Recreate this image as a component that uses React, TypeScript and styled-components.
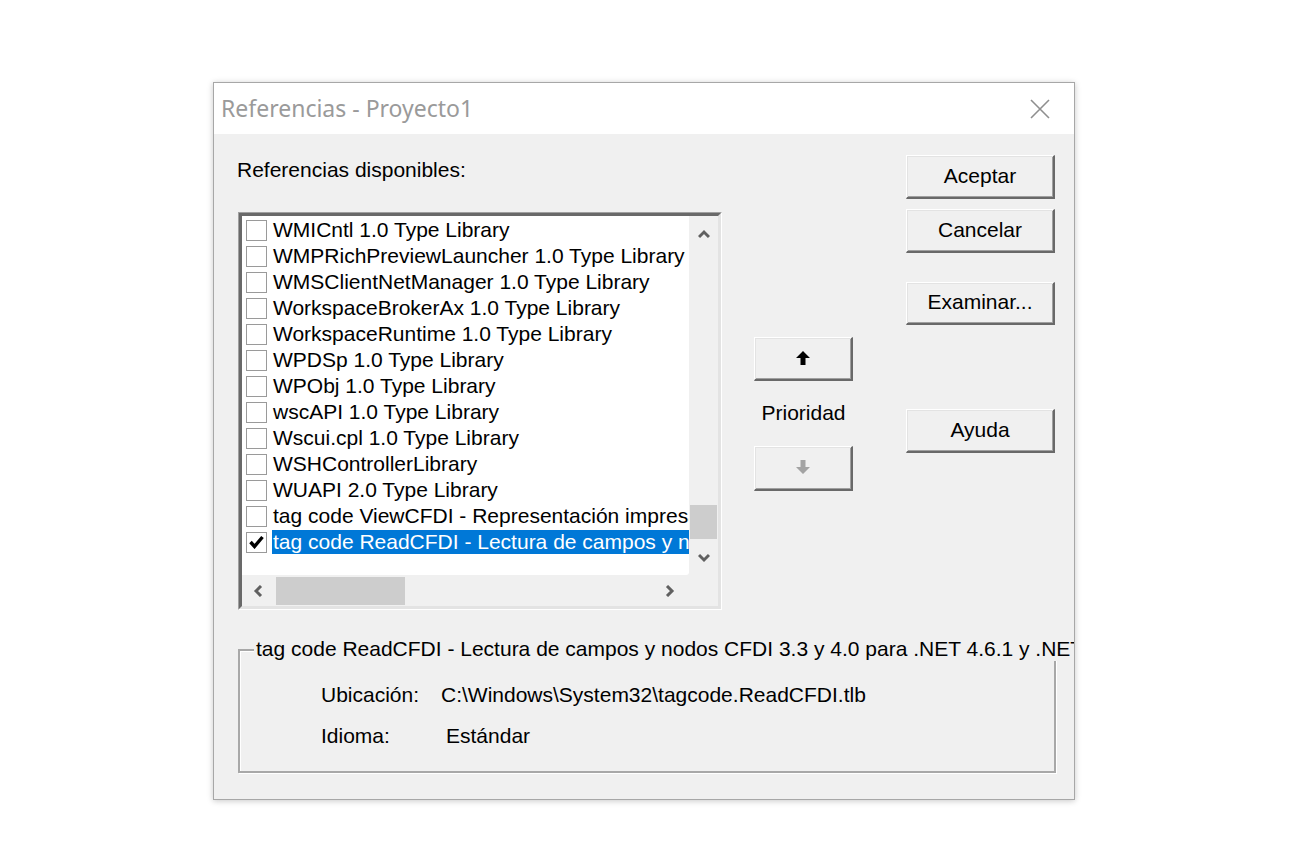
import styled, { createGlobalStyle } from 'styled-components'

const GlobalStyle = createGlobalStyle`
  html, body {
    margin: 0;
    padding: 0;
    background: #ffffff;
  }
  body {
    font-family: "Liberation Sans", Arial, sans-serif;
  }
`

const Page = styled.div`
  width: 1290px;
  height: 860px;
  padding: 82px 0 0 213px;
  box-sizing: border-box;
`

const Dialog = styled.div`
  width: 862px;
  height: 718px;
  box-sizing: border-box;
  border: 1px solid #a7a7a7;
  background: #f0f0f0;
  box-shadow: 0 1px 6px rgba(0, 0, 0, 0.22);
  overflow: hidden;
  display: flex;
  flex-direction: column;
`

const TitleBar = styled.div`
  height: 51px;
  flex: none;
  background: #ffffff;
  display: flex;
  align-items: center;
  justify-content: space-between;
  padding: 0 24px 0 7px;
`

const Title = styled.div`
  font-family: "Noto Sans", "Open Sans", sans-serif;
  font-size: 23px;
  color: #9a9a9a;
  margin-top: -1px;
`

const Body = styled.div`
  flex: 1;
  display: flex;
  flex-direction: column;
  padding: 0 0 0 23px;
  font-size: 21px;
`

const TopRow = styled.div`
  display: flex;
`

const LeftCol = styled.div`
  width: 485px;
  display: flex;
  flex-direction: column;
`

const Label = styled.div`
  margin-top: 24px;
  height: 24px;
  line-height: 24px;
  color: #000;
`

const ListBox = styled.div`
  margin-top: 30px;
  margin-left: 1px;
  width: 484px;
  height: 398px;
  box-sizing: border-box;
  border: 1px solid;
  border-color: #a0a0a0 #ffffff #ffffff #a0a0a0;
`

const ListInner = styled.div`
  width: 100%;
  height: 100%;
  box-sizing: border-box;
  border: 3px solid;
  border-color: #696969 #e3e3e3 #e3e3e3 #696969;
  display: grid;
  grid-template-columns: 1fr 29px;
  grid-template-rows: 1fr 31px;
  background: #f0f0f0;
`

const Items = styled.div`
  background: #ffffff;
  overflow: hidden;
  padding-top: 1px;
  border-bottom-right-radius: 3px;
`

const Row = styled.div`
  height: 26px;
  display: flex;
  align-items: center;
  white-space: nowrap;
`

const Check = styled.div`
  flex: none;
  width: 21px;
  height: 21px;
  box-sizing: border-box;
  margin: 0 5px 0 4px;
  border: 1px solid #9a9a9a;
  background: #fff;
  display: flex;
  align-items: center;
  justify-content: center;
`

const ItemText = styled.span<{ $selected?: boolean }>`
  line-height: 24px;
  padding: 0 1px;
  color: ${(p) => (p.$selected ? '#ffffff' : '#000000')};
  background: ${(p) => (p.$selected ? '#0078d7' : 'transparent')};
`

const VScroll = styled.div`
  display: flex;
  flex-direction: column;
  background: #f0f0f0;
`

const VArrow = styled.div<{ $h: number }>`
  height: ${(p) => p.$h}px;
  flex: none;
  display: flex;
  align-items: center;
  justify-content: center;
`

const VTrack = styled.div`
  flex: 1;
  display: flex;
  flex-direction: column;
  justify-content: flex-end;
  padding: 0 1px;
`

const VThumb = styled.div`
  height: 34px;
  background: #cdcdcd;
  margin-bottom: 1px;
`

const HScroll = styled.div`
  display: flex;
  background: #f0f0f0;
`

const HArrow = styled.div<{ $w: number }>`
  width: ${(p) => p.$w}px;
  flex: none;
  display: flex;
  align-items: center;
  justify-content: center;
`

const HTrack = styled.div`
  flex: 1;
  display: flex;
  padding: 2px 0 1px 0;
`

const HThumb = styled.div`
  width: 129px;
  background: #cdcdcd;
`

const Corner = styled.div`
  background: #f0f0f0;
`

const MidCol = styled.div`
  width: 99px;
  margin-left: 32px;
  padding-top: 203px;
  display: flex;
  flex-direction: column;
  align-items: center;
`

const Prioridad = styled.div`
  height: 24px;
  line-height: 24px;
  margin: 20px 0 21px;
`

const RightCol = styled.div`
  width: 149px;
  margin-left: 53px;
  padding-top: 21px;
  display: flex;
  flex-direction: column;
`

const Button = styled.div<{ $top?: number; $w?: number; $h?: number }>`
  width: ${(p) => p.$w ?? 149}px;
  height: ${(p) => p.$h ?? 44}px;
  margin-top: ${(p) => p.$top ?? 0}px;
  box-sizing: border-box;
  flex: none;
  background: #f0f0f0;
  border-top: 1px solid #ffffff;
  border-left: 1px solid #ffffff;
  border-right: 2px solid #696969;
  border-bottom: 2px solid #696969;
  box-shadow: inset 1px 1px 0 #e3e3e3, inset -1px -1px 0 #a0a0a0;
  display: flex;
  align-items: center;
  justify-content: center;
  color: #000;
  padding-bottom: 2px;
`

const GroupBox = styled.div`
  position: relative;
  margin-top: 39px;
  margin-left: 1px;
  width: 818px;
  height: 124px;
  box-sizing: border-box;
  border: 2px solid #a8a8a8;
  box-shadow: inset 1px 1px 0 #ffffff, 1px 1px 0 #ffffff;
`

const Legend = styled.div`
  position: absolute;
  left: 14px;
  top: -14px;
  padding: 0 2px;
  background: #f0f0f0;
  line-height: 24px;
  white-space: nowrap;
`

const InfoGrid = styled.div`
  display: grid;
  grid-template-columns: 120px auto;
  grid-auto-rows: 41px;
  padding: 30px 0 0 81px;
  line-height: 28px;
`

const InfoValue = styled.div<{ $indent?: number }>`
  padding-left: ${(p) => p.$indent ?? 0}px;
`

const items = [
  'WMICntl 1.0 Type Library',
  'WMPRichPreviewLauncher 1.0 Type Library',
  'WMSClientNetManager 1.0 Type Library',
  'WorkspaceBrokerAx 1.0 Type Library',
  'WorkspaceRuntime 1.0 Type Library',
  'WPDSp 1.0 Type Library',
  'WPObj 1.0 Type Library',
  'wscAPI 1.0 Type Library',
  'Wscui.cpl 1.0 Type Library',
  'WSHControllerLibrary',
  'WUAPI 2.0 Type Library',
  'tag code ViewCFDI - Representación impresa de CFDI',
  'tag code ReadCFDI - Lectura de campos y nodos CFDI 3.3 y 4.0',
]

function Chevron({ dir }: { dir: 'up' | 'down' | 'left' | 'right' }) {
  const pts = {
    up: '1,8 6,3 11,8',
    down: '1,3 6,8 11,3',
    left: '8,1 3,6 8,11',
    right: '3,1 8,6 3,11',
  }[dir]
  return (
    <svg width="12" height="12" viewBox="0 0 12 12">
      <polyline points={pts} fill="none" stroke="#606060" strokeWidth="3" />
    </svg>
  )
}

function Arrow({ down }: { down?: boolean }) {
  return (
    <svg width="16" height="16" viewBox="0 0 16 16" style={{ transform: down ? 'rotate(180deg)' : undefined }}>
      <polygon points="8,1 15,8 10.5,8 10.5,15 5.5,15 5.5,8 1,8" fill={down ? '#a3a3a3' : '#000'} />
    </svg>
  )
}

export default function App() {
  return (
    <>
      <GlobalStyle />
      <Page>
        <Dialog>
          <TitleBar>
            <Title>Referencias - Proyecto1</Title>
            <svg width="20" height="20" viewBox="0 0 20 20">
              <path d="M1 1 L19 19 M19 1 L1 19" stroke="#8f8f8f" strokeWidth="1.6" />
            </svg>
          </TitleBar>
          <Body>
            <TopRow>
              <LeftCol>
                <Label>Referencias disponibles:</Label>
                <ListBox>
                  <ListInner>
                    <Items>
                      {items.map((t, i) => {
                        const sel = i === items.length - 1
                        return (
                          <Row key={t}>
                            <Check>
                              {sel && (
                                <svg width="15" height="14" viewBox="0 0 15 14">
                                  <polyline points="1.5,7 5.5,11.5 13.5,2" fill="none" stroke="#000" strokeWidth="3.4" />
                                </svg>
                              )}
                            </Check>
                            <ItemText $selected={sel}>{t}</ItemText>
                          </Row>
                        )
                      })}
                    </Items>
                    <VScroll>
                      <VArrow $h={38}>
                        <Chevron dir="up" />
                      </VArrow>
                      <VTrack>
                        <VThumb />
                      </VTrack>
                      <VArrow $h={35}>
                        <Chevron dir="down" />
                      </VArrow>
                    </VScroll>
                    <HScroll>
                      <HArrow $w={34}>
                        <Chevron dir="left" />
                      </HArrow>
                      <HTrack>
                        <HThumb />
                      </HTrack>
                      <HArrow $w={38}>
                        <Chevron dir="right" />
                      </HArrow>
                    </HScroll>
                    <Corner />
                  </ListInner>
                </ListBox>
              </LeftCol>
              <MidCol>
                <Button $w={99} $h={44}>
                  <Arrow />
                </Button>
                <Prioridad>Prioridad</Prioridad>
                <Button $w={99} $h={45}>
                  <Arrow down />
                </Button>
              </MidCol>
              <RightCol>
                <Button>Aceptar</Button>
                <Button $top={10}>Cancelar</Button>
                <Button $top={29} $h={43}>Examinar...</Button>
                <Button $top={84}>Ayuda</Button>
              </RightCol>
            </TopRow>
            <GroupBox>
              <Legend>tag code ReadCFDI - Lectura de campos y nodos CFDI 3.3 y 4.0 para .NET 4.6.1 y .NET 4.8</Legend>
              <InfoGrid>
                <div>Ubicación:</div>
                <InfoValue>C:\Windows\System32\tagcode.ReadCFDI.tlb</InfoValue>
                <div>Idioma:</div>
                <InfoValue $indent={5}>Estándar</InfoValue>
              </InfoGrid>
            </GroupBox>
          </Body>
        </Dialog>
      </Page>
    </>
  )
}
